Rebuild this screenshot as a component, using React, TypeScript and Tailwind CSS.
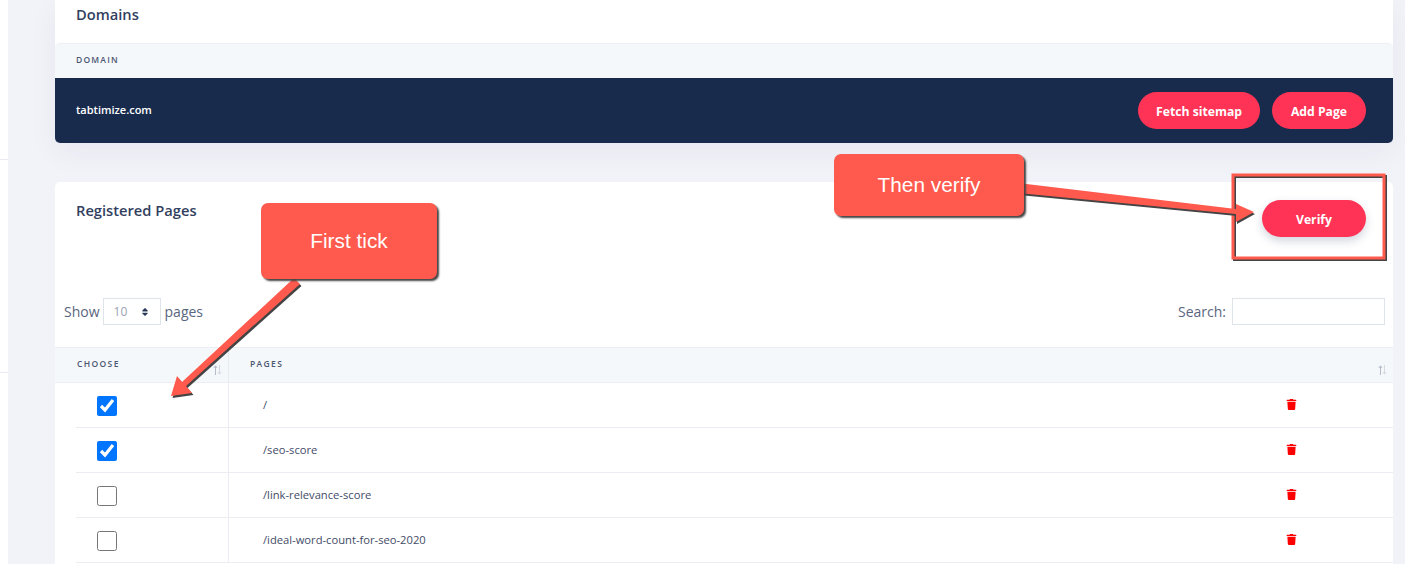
import { FaTrash, FaSort } from "react-icons/fa";

const pages = [
  { path: "/", checked: true },
  { path: "/seo-score", checked: true },
  { path: "/link-relevance-score", checked: false },
  { path: "/ideal-word-count-for-seo-2020", checked: false },
];

function SortIcon() {
  return (
    <svg width="9" height="10" viewBox="0 0 9 10" fill="none" strokeWidth="1">
      <path d="M2.5 10V1M0.8 3L2.5 0.8L4.2 3" stroke="#b4bcc8" />
      <path d="M6.5 0V9M4.8 7L6.5 9.2L8.2 7" stroke="#d5dae2" />
    </svg>
  );
}

function PillButton({ label, className }: { label: string; className: string }) {
  return (
    <button className={`h-[37px] rounded-full bg-[#ff3355] pt-[3px] text-white text-[12.2px] font-bold ${className}`}>
      {label}
    </button>
  );
}

export default function App() {
  return (
    <div
      className="relative flex h-[564px] w-[1405px] overflow-hidden bg-[#f2f3f8] text-[#2a3857]"
      style={{ fontFamily: '"Open Sans", sans-serif' }}
    >
      {/* sidebar edge */}
      <div className="w-2 shrink-0 bg-white">
        <div className="h-[160px] border-b border-[#e9ebf0]" />
        <div className="h-[213px] border-b border-[#e9ebf0]" />
      </div>

      <main className="ml-[47px] w-[1338px] shrink-0">
        {/* Domains card */}
        <section className="h-[143px] rounded-b-[5px] bg-white shadow-[0_10px_30px_rgba(30,45,90,0.05)]">
          <h2 className="h-[43px] pl-[21px] pt-[4px] text-[14.7px] leading-5 font-semibold text-[#323f60]">Domains</h2>
          <div className="flex h-[35px] items-center rounded-t-[5px] border-t border-[#edf0f4] bg-[#f5f8fb] pb-[2px] pl-[21px] text-[8.5px] font-semibold tracking-[0.14em] text-[#4b5772]">
            DOMAIN
          </div>
          <div className="flex h-[65px] items-center justify-between rounded-b-[5px] bg-[#182b4d] pl-[21px] pr-[27px]">
            <span className="text-[11px] font-semibold text-white">tabtimize.com</span>
            <div className="flex gap-3">
              <PillButton label="Fetch sitemap" className="w-[122px]" />
              <PillButton label="Add Page" className="w-[94px]" />
            </div>
          </div>
        </section>

        {/* Registered pages card */}
        <section className="mt-[39px] h-[400px] rounded-t-[5px] bg-white">
          <div className="flex h-[116px] items-start justify-between pl-[21px] pr-[27px] pt-[18px]">
            <h2 className="text-[14.7px] leading-5 font-semibold text-[#323f60]">Registered Pages</h2>
            <PillButton
              label="Verify"
              className="w-[104px] shadow-[0_4px_10px_rgba(30,45,90,0.2)]"
            />
          </div>

          <div className="flex h-[49px] items-start justify-between pl-[9px] pr-2 text-[14px] text-[#5a6680]">
            <div className="flex h-[27px] items-center">
              <span>Show</span>
              <div className="ml-[3px] flex h-[27px] w-[58px] items-center justify-between border border-[#dfe3ea] pl-[10px] pr-[10px] text-[12px] text-[#9aa3b5]">
                <span>10</span>
                <FaSort size={10} className="text-[#2a3857]" />
              </div>
              <span className="ml-1">pages</span>
            </div>
            <label className="flex h-[27px] items-center gap-[6px]">
              Search:
              <input className="h-[27px] w-[153px] border border-[#dfe3ea] bg-white" />
            </label>
          </div>

          <div className="flex h-[36px] border-y border-[#ebeef3] bg-[#f5f8fb] text-[8.5px] font-semibold tracking-[0.16em] text-[#4b5772]">
            <div className="flex w-[174px] items-center justify-between border-r border-[#e8ebf0] pb-[2px] pl-[22px] pr-[6px]">
              <span>CHOOSE</span>
              <span className="pt-3"><SortIcon /></span>
            </div>
            <div className="flex flex-1 items-center justify-between pb-[2px] pl-[21px] pr-[6px]">
              <span>PAGES</span>
              <span className="pt-3"><SortIcon /></span>
            </div>
          </div>

          {pages.map((page) => (
            <div key={page.path} className="flex h-[45px] pl-[21px]">
              <div className="flex w-[153px] items-center border-b border-r border-[#ebedf2] pl-[21px] pt-[2px]">
                <input type="checkbox" defaultChecked={page.checked} className="h-5 w-5" />
              </div>
              <div className="flex flex-1 items-center justify-between border-b border-[#ebedf2] pl-[34px] pr-[96px] text-[11.2px] text-[#3f4b66]">
                <span className="pt-px">{page.path}</span>
                <FaTrash size={11} color="#ff0000" className="-mt-[1px]" />
              </div>
            </div>
          ))}
        </section>
      </main>

      {/* tutorial annotations drawn over the page */}
      <svg className="pointer-events-none absolute left-0 top-0" width="1405" height="564" fill="none">
        <rect x="1233" y="175" width="151" height="83" stroke="#444444" strokeWidth="3" transform="translate(1.5 1.5)" />
        <rect x="1233" y="175" width="151" height="83" stroke="#ff5a4d" strokeWidth="3" />
        <polygon points="1018,183 1236,209 1236,204 1254,212 1236,222 1236,214 1018,193" fill="#444444" transform="translate(1 2)" />
        <polygon points="1018,183 1236,209 1236,204 1254,212 1236,222 1236,214 1018,193" fill="#ff5a4d" />
        <polygon points="294,278 300,284 186,386 192,393 171,396 177,376 182,382" fill="#444444" transform="translate(1.5 2)" />
        <polygon points="294,278 300,284 186,386 192,393 171,396 177,376 182,382" fill="#ff5a4d" />
      </svg>
      <div className="absolute left-[261px] top-[203px] flex h-[76px] w-[176px] items-center justify-center rounded-[7px] bg-[#ff5a4d] pb-[1px] text-[20.8px] text-white shadow-[2px_2px_2px_#444444]" style={{ fontFamily: '"Liberation Sans", sans-serif' }}>
        First tick
      </div>
      <div className="absolute left-[834px] top-[154px] flex h-[62px] w-[190px] items-center justify-center rounded-[7px] bg-[#ff5a4d] text-[20.8px] text-white shadow-[2px_2px_2px_#444444]" style={{ fontFamily: '"Liberation Sans", sans-serif' }}>
        Then verify
      </div>
    </div>
  );
}
